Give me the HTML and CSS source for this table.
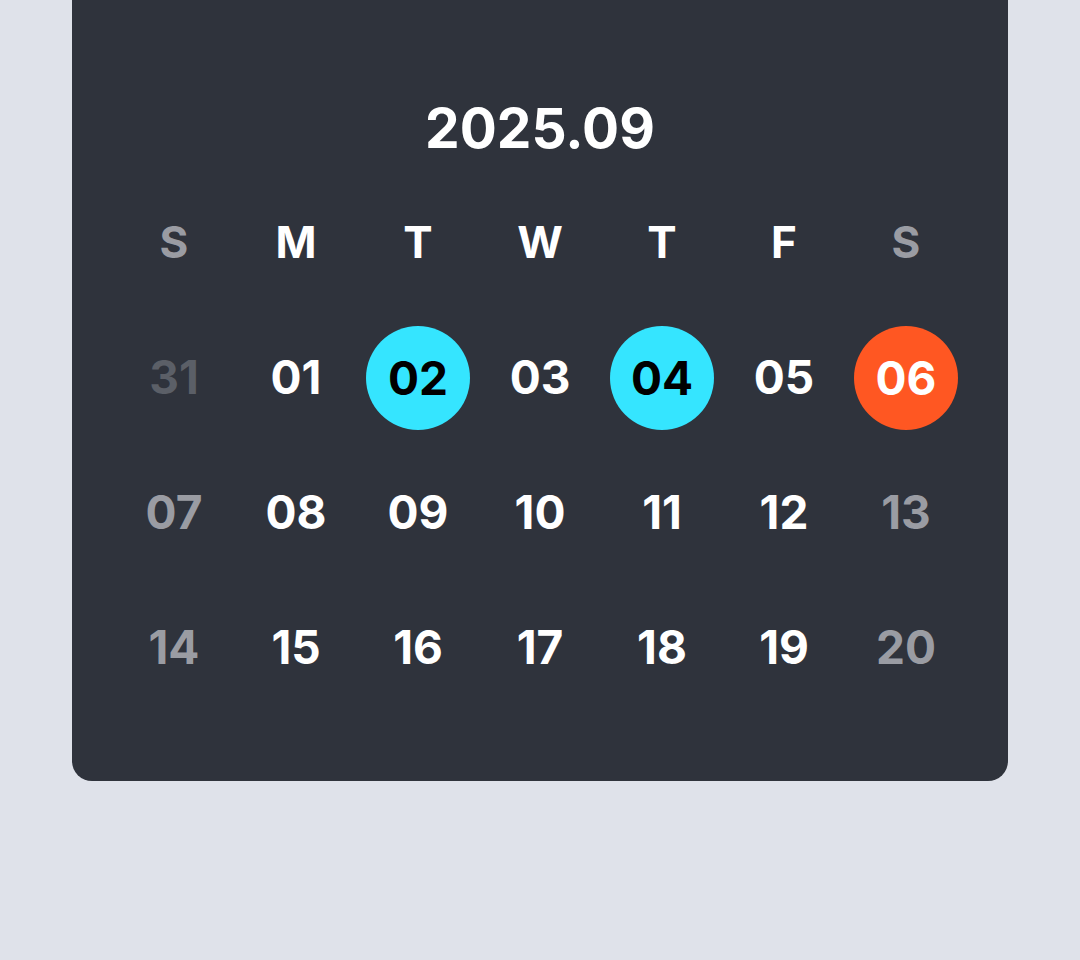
FILE: index.html
```html
<!DOCTYPE html>
<html lang="en">
<head>
<meta charset="utf-8">
<title>Calendar</title>
<link rel="stylesheet" href="styles.css">
</head>
<body>
<div class="page">
  <section class="card">
    <h1 class="title">2025.09</h1>
    <div class="grid">
      <div class="cell wd weekend">S</div>
      <div class="cell wd">M</div>
      <div class="cell wd">T</div>
      <div class="cell wd">W</div>
      <div class="cell wd">T</div>
      <div class="cell wd">F</div>
      <div class="cell wd weekend">S</div>

      <div class="cell day outside">31</div>
      <div class="cell day">01</div>
      <div class="cell day"><span class="dot cyan">02</span></div>
      <div class="cell day">03</div>
      <div class="cell day"><span class="dot cyan">04</span></div>
      <div class="cell day">05</div>
      <div class="cell day"><span class="dot orange">06</span></div>

      <div class="cell day weekend">07</div>
      <div class="cell day">08</div>
      <div class="cell day">09</div>
      <div class="cell day">10</div>
      <div class="cell day">11</div>
      <div class="cell day">12</div>
      <div class="cell day weekend">13</div>

      <div class="cell day weekend">14</div>
      <div class="cell day">15</div>
      <div class="cell day">16</div>
      <div class="cell day">17</div>
      <div class="cell day">18</div>
      <div class="cell day">19</div>
      <div class="cell day weekend">20</div>
    </div>
  </section>
</div>
</body>
</html>
```

FILE: styles.css
```css
* { box-sizing: border-box; }
html, body {
  margin: 0;
  padding: 0;
  background: #dfe2ea;
  height: 960px;
  overflow: hidden;
}
body {
  font-family: "Inter", "Liberation Sans", sans-serif;
  color: #ffffff;
}
.page {
  padding: 0 72px;
}
.card {
  background: #2f333c;
  border-radius: 0 0 20px 20px;
  padding: 98px 41px 67px;
}
.title {
  margin: 0 0 16px;
  height: 60px;
  line-height: 60px;
  font-size: 55px;
  font-weight: 700;
  text-align: center;
  letter-spacing: 0;
}
.grid {
  display: grid;
  grid-template-columns: repeat(7, 122px);
  grid-auto-rows: 135px;
}
.cell {
  display: flex;
  align-items: center;
  justify-content: center;
  font-weight: 700;
}
.wd {
  font-size: 44px;
}
.day {
  font-size: 46px;
}
.weekend { color: #9a9ca3; }
.outside { color: #5b5f67; }
.dot {
  width: 104px;
  height: 104px;
  margin-top: 3px;
  border-radius: 50%;
  display: flex;
  align-items: center;
  justify-content: center;
}
.cyan { background: #35e5ff; color: #000000; }
.orange { background: #ff5722; color: #ffffff; }
```
